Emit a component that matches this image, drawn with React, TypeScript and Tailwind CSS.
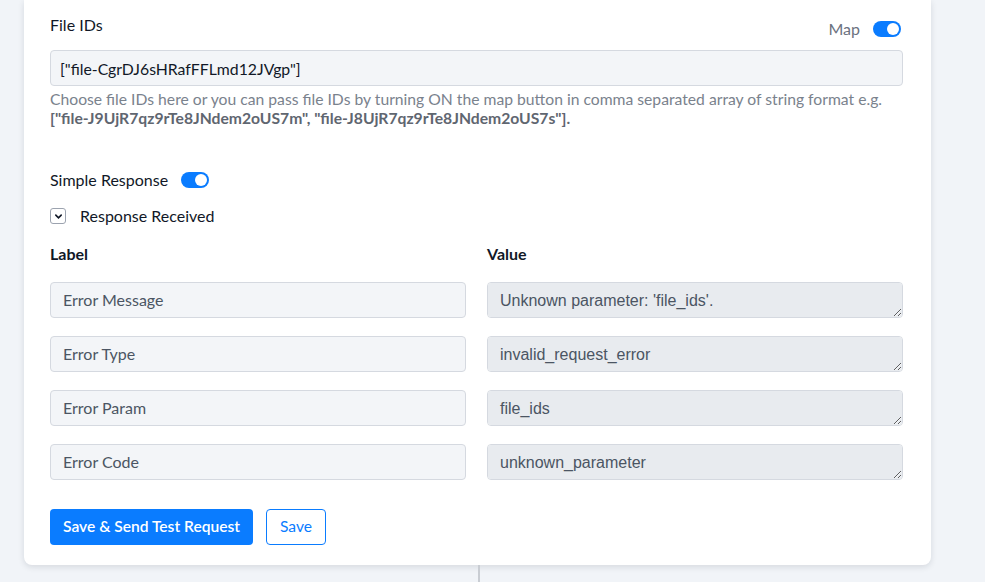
import { useState } from "react";

const responseRows = [
  { label: "Error Message", value: "Unknown parameter: 'file_ids'." },
  { label: "Error Type", value: "invalid_request_error" },
  { label: "Error Param", value: "file_ids" },
  { label: "Error Code", value: "unknown_parameter" },
];

function Toggle({ on, onChange }: { on: boolean; onChange: () => void }) {
  return (
    <button
      type="button"
      onClick={onChange}
      className={`relative inline-flex h-[16px] w-[28px] items-center rounded-full transition ${
        on ? "bg-[#0a7cff]" : "bg-gray-300"
      }`}
    >
      <span
        className={`absolute h-[12px] w-[12px] rounded-full bg-white transition ${on ? "left-[14px]" : "left-[2px]"}`}
      />
    </button>
  );
}

export default function App() {
  const [mapOn, setMapOn] = useState(true);
  const [simple, setSimple] = useState(true);
  const [open, setOpen] = useState(true);

  return (
    <div className="min-h-[582px] w-[985px] overflow-hidden bg-[#f1f4f8] font-['Lato',sans-serif] text-[#1f2937]">
      <div className="ml-[24px] w-[907px] rounded-b-lg bg-white pb-[20px] pl-[26px] pr-[30px] pt-[15px] shadow-[0_2px_6px_rgba(15,23,42,0.12)]">
        <div className="flex w-[853px] items-end justify-between">
          <label className="text-[16px] leading-[20px] text-[#111827]">File IDs</label>
          <div className="mb-[-6px] mr-[2px] flex items-center gap-[13px]">
            <span className="text-[16px] text-[#6b7280]">Map</span>
            <Toggle on={mapOn} onChange={() => setMapOn(!mapOn)} />
          </div>
        </div>
        <input
          readOnly
          value={'["file-CgrDJ6sHRafFFLmd12JVgp"]'}
          className="mt-[15px] h-[36px] w-[853px] rounded-[4px] border border-[#d5d9e0] bg-[#f3f5f8] px-[9px] text-[15.8px] text-[#111827] outline-none"
        />
        <p className="mt-[4px] text-[15.7px] leading-[19px] text-[#7a828d]">
          Choose file IDs here or you can pass file IDs by turning ON the map button in comma separated array of string
          format e.g.
          <br />
          <b className="font-bold text-[#5f6670]">
            ["file-J9UjR7qz9rTe8JNdem2oUS7m", "file-J8UjR7qz9rTe8JNdem2oUS7s"].
          </b>
        </p>

        <div className="mt-[40px] flex items-center gap-[13px]">
          <span className="text-[16px] text-[#111827]">Simple Response</span>
          <Toggle on={simple} onChange={() => setSimple(!simple)} />
        </div>

        <button
          type="button"
          onClick={() => setOpen(!open)}
          className="mt-[12px] flex items-center gap-[14px] text-[16px] text-[#111827]"
        >
          <span className="flex h-[16px] w-[16px] items-center justify-center rounded-[3px] border border-[#9ca3af]">
            <svg width="9" height="9" viewBox="0 0 10 10" className={open ? "" : "-rotate-90"}>
              <path d="M2 3.5 L5 6.5 L8 3.5" fill="none" stroke="#111827" strokeWidth="1.8" strokeLinecap="round" />
            </svg>
          </span>
          Response Received
        </button>

        {open && (
          <div className="mt-[14px] grid w-[853px] grid-cols-2 gap-x-[21px]">
            <div className="mb-[16px] text-[16px] font-bold text-[#111827]">Label</div>
            <div className="mb-[16px] text-[16px] font-bold text-[#111827]">Value</div>
            {responseRows.map((row) => (
              <div key={row.label} className="contents">
                <div className="mb-[18px] flex h-[36px] items-center rounded-[4px] border border-[#d5d9e0] bg-[#f3f5f8] px-[12px] text-[16px] text-[#4b5563]">
                  {row.label}
                </div>
                <textarea
                  readOnly
                  disabled
                  value={row.value}
                  className="mb-[18px] h-[36px] resize-y rounded-[4px] border border-[#d5d9e0] bg-[#e8ebef] px-[12px] py-[6px] font-['Liberation_Sans',sans-serif] text-[16px] leading-[24px] text-[#4b5563] outline-none"
                />
              </div>
            ))}
          </div>
        )}

        <div className="mt-[11px] flex items-center gap-[13px]">
          <button
            type="button"
            className="h-[36px] rounded-[4px] bg-[#0a7cff] px-[13px] text-[15.6px] font-semibold text-white"
          >
            Save &amp; Send Test Request
          </button>
          <button
            type="button"
            className="h-[36px] rounded-[4px] border border-[#0a7cff] bg-white px-[13px] text-[15.6px] text-[#0a7cff]"
          >
            Save
          </button>
        </div>
      </div>
      <div className="ml-[478px] h-[20px] w-[2px] bg-[#c9cdd3]" />
    </div>
  );
}
